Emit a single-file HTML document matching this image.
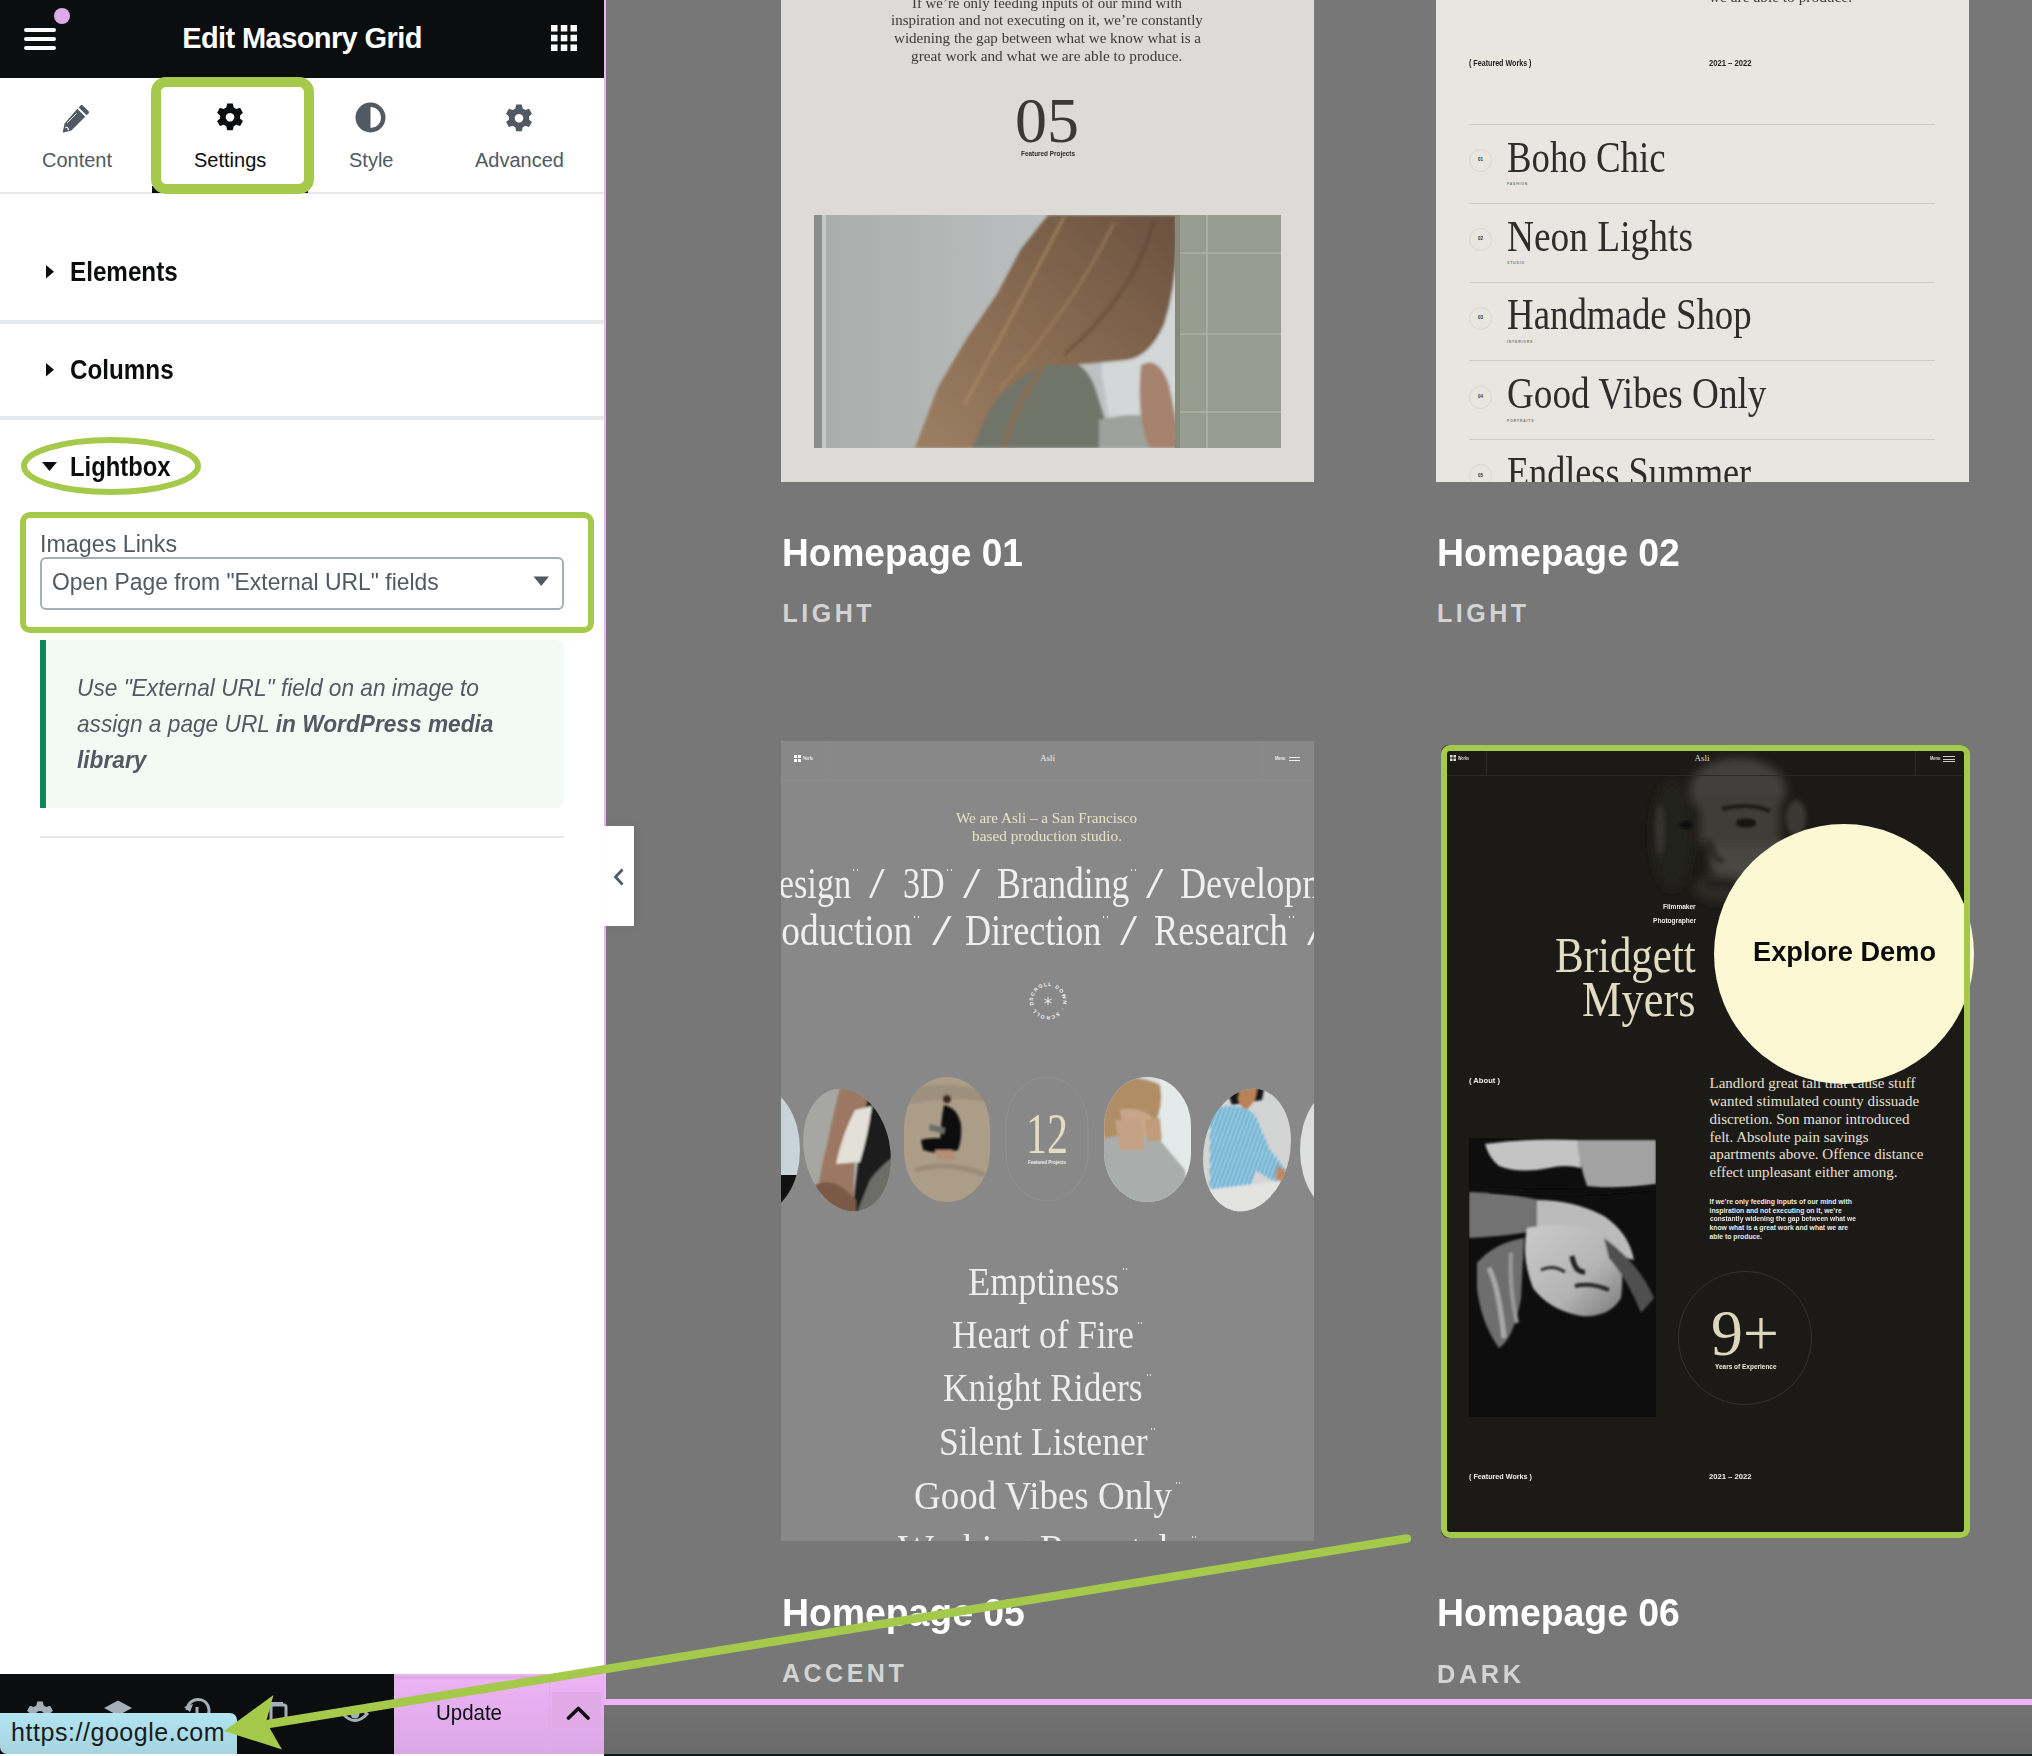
<!DOCTYPE html>
<html><head><meta charset="utf-8">
<style>
*{margin:0;padding:0;box-sizing:border-box}
html,body{width:2032px;height:1756px;overflow:hidden;background:#777777;font-family:"Liberation Sans",sans-serif}
.a{position:absolute}
.sx{display:inline-block;transform-origin:0 0;white-space:nowrap}
.serif{font-family:"Liberation Serif",serif}
#panel{position:absolute;left:0;top:0;width:604px;height:1756px;background:#fff;overflow:hidden}
#hdr{position:absolute;left:0;top:0;width:604px;height:78px;background:#0c0d0e}
.tablbl{position:absolute;top:148px;font-size:20px;color:#515962;white-space:nowrap;line-height:24px}
.sect{position:absolute;left:70px;margin-top:1px;font-size:28px;font-weight:bold;color:#0c0d0e;white-space:nowrap;line-height:32px}
.sep{position:absolute;left:0;width:604px;height:4px;background:#e6e8ea}
#preview{position:absolute;left:606px;top:0;width:1426px;height:1699px;background:#777;overflow:hidden}
.title{position:absolute;font-weight:bold;font-size:38px;color:#fff;white-space:nowrap;line-height:44px}
.sub{position:absolute;font-weight:bold;font-size:25px;color:#d2d2d2;letter-spacing:3.6px;white-space:nowrap;line-height:30px}
</style></head>
<body>
<!-- PREVIEW -->
<div id="preview"></div>
<!--PREVIEW-START-->
<div class="a" style="left:781px;top:0;width:533px;height:482px;background:#dcdbd8"></div>
<div class="a" style="left:912.0px;top:-5.5px;font:normal normal 15.5px/15.5px 'Liberation Serif',serif;color:#3b3a38;white-space:nowrap;transform:scaleX(0.959);transform-origin:0 0">If we’re only feeding inputs of our mind with</div>
<div class="a" style="left:891.0px;top:12.2px;font:normal normal 15.5px/15.5px 'Liberation Serif',serif;color:#3b3a38;white-space:nowrap;transform:scaleX(0.966);transform-origin:0 0">inspiration and not executing on it, we’re constantly</div>
<div class="a" style="left:893.5px;top:30.0px;font:normal normal 15.5px/15.5px 'Liberation Serif',serif;color:#3b3a38;white-space:nowrap;transform:scaleX(0.973);transform-origin:0 0">widening the gap between what we know what is a</div>
<div class="a" style="left:911.2px;top:47.6px;font:normal normal 15.5px/15.5px 'Liberation Serif',serif;color:#3b3a38;white-space:nowrap;transform:scaleX(0.987);transform-origin:0 0">great work and what we are able to produce.</div>
<div class="a" style="left:1015.0px;top:88.6px;font:normal normal 64px/64px 'Liberation Serif',serif;color:#3a3936;white-space:nowrap">05</div>
<div class="a" style="left:1020.5px;top:150.2px;font:normal bold 8px/8px 'Liberation Sans',sans-serif;color:#2a2a2a;white-space:nowrap;transform:scaleX(0.799);transform-origin:0 0">Featured Projects</div>
<svg class="a" style="left:814px;top:215px" width="467" height="233" viewBox="0 0 467 233">
<defs>
 <linearGradient id="c1bg" x1="0" y1="0" x2="1" y2="0"><stop offset="0" stop-color="#a9acaa"/><stop offset="0.45" stop-color="#b9bdbd"/><stop offset="1" stop-color="#c9cdcd"/></linearGradient>
 <filter id="bl1" x="-50%" y="-50%" width="200%" height="200%"><feGaussianBlur stdDeviation="1.6"/></filter>
 <linearGradient id="hair" x1="0" y1="1" x2="1" y2="0"><stop offset="0" stop-color="#9c7e62"/><stop offset="0.5" stop-color="#876a50"/><stop offset="1" stop-color="#6a5240"/></linearGradient>
</defs>
<rect width="467" height="233" fill="url(#c1bg)"/>
<rect x="0" y="0" width="10" height="233" fill="#8b8e88"/>
<rect x="8" y="0" width="4" height="233" fill="#c3c8c8"/>
<g filter="url(#bl1)">
<path d="M285 30 L363 10 L365 233 L300 233 L288 160 Z" fill="#d3d7d8"/>
<path d="M131 233 L160 185 Q200 150 240 140 Q270 145 280 170 L300 233 Z" fill="#717469"/>
<path d="M285 205 Q320 195 360 205 L365 233 L285 233 Z" fill="#9ea29c"/>
<path d="M327 150 Q345 140 355 170 L368 233 L335 233 Q322 200 327 150 Z" fill="#a5826e"/>
<path d="M234 0 L362 0 Q366 60 350 110 Q335 142 313 145 Q270 150 230 150 Q195 165 175 195 L158 233 L101 233 L124 172 L153 123 L183 79 L207 34 Z" fill="url(#hair)"/>
<path d="M250 2 Q215 70 150 190" stroke="#b08d68" stroke-width="3" fill="none" opacity="0.6"/>
<path d="M300 8 Q260 90 185 175" stroke="#a98560" stroke-width="3" fill="none" opacity="0.5"/>
<path d="M340 5 Q320 80 250 140" stroke="#5c4535" stroke-width="4" fill="none" opacity="0.5"/>
<path d="M230 150 Q200 190 190 233" stroke="#8f6d4f" stroke-width="5" fill="none" opacity="0.8"/>
</g>
<rect x="364" y="0" width="103" height="233" fill="#989c90"/>
<g stroke="#adb1a6" stroke-width="1.6">
<line x1="364" y1="38" x2="467" y2="38"/><line x1="364" y1="119" x2="467" y2="119"/><line x1="364" y1="197" x2="467" y2="197"/>
<line x1="393" y1="0" x2="393" y2="233"/>
</g>
<rect x="361" y="0" width="5" height="233" fill="#858979"/>
</svg>
<div class="a" style="left:1436px;top:0;width:533px;height:482px;background:#e7e6e1;overflow:hidden"></div>
<div class="a" style="left:1709.0px;top:-11.5px;font:normal normal 15.5px/15.5px 'Liberation Serif',serif;color:#3b3a38;white-space:nowrap;transform:scaleX(0.992);transform-origin:0 0">we are able to produce.</div>
<div class="a" style="left:1469.0px;top:59.3px;font:normal bold 8.5px/8.5px 'Liberation Sans',sans-serif;color:#222120;white-space:nowrap;transform:scaleX(0.839);transform-origin:0 0">( Featured Works )</div>
<div class="a" style="left:1709.0px;top:59.3px;font:normal bold 8.5px/8.5px 'Liberation Sans',sans-serif;color:#222120;white-space:nowrap;transform:scaleX(0.899);transform-origin:0 0">2021 – 2022</div>
<div class="a" style="left:1469px;top:124.0px;width:466px;height:1px;background:#cdcbc6"></div>
<div class="a" style="left:1469px;top:202.8px;width:466px;height:1px;background:#cdcbc6"></div>
<div class="a" style="left:1469px;top:281.8px;width:466px;height:1px;background:#cdcbc6"></div>
<div class="a" style="left:1469px;top:360.3px;width:466px;height:1px;background:#cdcbc6"></div>
<div class="a" style="left:1469px;top:438.9px;width:466px;height:1px;background:#cdcbc6"></div>
<div class="a" style="left:1507.0px;top:135.8px;font:normal normal 44px/44px 'Liberation Serif',serif;color:#2e2d2b;white-space:nowrap;transform:scaleX(0.837);transform-origin:0 0">Boho Chic</div>
<div class="a" style="left:1469px;top:149.2px;width:23px;height:23px;border:1px solid #d9d7d2;border-radius:50%"></div>
<div class="a" style="left:1478.1px;top:158.4px;font:normal bold 4.5px/4.5px 'Liberation Sans',sans-serif;color:#333;white-space:nowrap">01</div>
<div class="a" style="left:1507.0px;top:183.2px;font:normal bold 3.5px/3.5px 'Liberation Sans',sans-serif;color:#777;white-space:nowrap;letter-spacing:0.8px">FASHION</div>
<div class="a" style="left:1507.0px;top:214.7px;font:normal normal 44px/44px 'Liberation Serif',serif;color:#2e2d2b;white-space:nowrap;transform:scaleX(0.850);transform-origin:0 0">Neon Lights</div>
<div class="a" style="left:1469px;top:228.0px;width:23px;height:23px;border:1px solid #d9d7d2;border-radius:50%"></div>
<div class="a" style="left:1478.1px;top:237.2px;font:normal bold 4.5px/4.5px 'Liberation Sans',sans-serif;color:#333;white-space:nowrap">02</div>
<div class="a" style="left:1507.0px;top:262.0px;font:normal bold 3.5px/3.5px 'Liberation Sans',sans-serif;color:#777;white-space:nowrap;letter-spacing:0.8px">STUDIO</div>
<div class="a" style="left:1507.0px;top:293.3px;font:normal normal 44px/44px 'Liberation Serif',serif;color:#2e2d2b;white-space:nowrap;transform:scaleX(0.838);transform-origin:0 0">Handmade Shop</div>
<div class="a" style="left:1469px;top:306.7px;width:23px;height:23px;border:1px solid #d9d7d2;border-radius:50%"></div>
<div class="a" style="left:1478.1px;top:315.9px;font:normal bold 4.5px/4.5px 'Liberation Sans',sans-serif;color:#333;white-space:nowrap">03</div>
<div class="a" style="left:1507.0px;top:340.7px;font:normal bold 3.5px/3.5px 'Liberation Sans',sans-serif;color:#777;white-space:nowrap;letter-spacing:0.8px">INTERIORS</div>
<div class="a" style="left:1507.0px;top:372.1px;font:normal normal 44px/44px 'Liberation Serif',serif;color:#2e2d2b;white-space:nowrap;transform:scaleX(0.845);transform-origin:0 0">Good Vibes Only</div>
<div class="a" style="left:1469px;top:385.5px;width:23px;height:23px;border:1px solid #d9d7d2;border-radius:50%"></div>
<div class="a" style="left:1478.1px;top:394.7px;font:normal bold 4.5px/4.5px 'Liberation Sans',sans-serif;color:#333;white-space:nowrap">04</div>
<div class="a" style="left:1507.0px;top:419.5px;font:normal bold 3.5px/3.5px 'Liberation Sans',sans-serif;color:#777;white-space:nowrap;letter-spacing:0.8px">PORTRAITS</div>
<div class="a" style="left:1507.0px;top:450.9px;font:normal normal 44px/44px 'Liberation Serif',serif;color:#2e2d2b;white-space:nowrap;transform:scaleX(0.822);transform-origin:0 0">Endless Summer</div>
<div class="a" style="left:1469px;top:464.3px;width:23px;height:23px;border:1px solid #d9d7d2;border-radius:50%"></div>
<div class="a" style="left:1478.1px;top:473.5px;font:normal bold 4.5px/4.5px 'Liberation Sans',sans-serif;color:#333;white-space:nowrap">05</div>
<div class="a" style="left:1507.0px;top:498.3px;font:normal bold 3.5px/3.5px 'Liberation Sans',sans-serif;color:#777;white-space:nowrap;letter-spacing:0.8px">COMMERCIAL</div>
<div class="a" style="left:1436px;top:481.7px;width:533px;height:40px;background:#777"></div>
<div class="a" style="left:781px;top:741px;width:533px;height:800px;background:#888888"></div>
<div class="a" style="left:781px;top:780px;width:533px;height:1px;background:#8c8c8c"></div>
<div class="a" style="left:830px;top:741px;width:1px;height:39px;background:#8b8b8b"></div>
<div class="a" style="left:1261px;top:741px;width:1px;height:39px;background:#8b8b8b"></div>
<svg class="a" style="left:794px;top:755px" width="7" height="7"><g fill="#fff"><rect width="3" height="3"/><rect x="4" width="3" height="3"/><rect y="4" width="3" height="3"/><rect x="4" y="4" width="3" height="3"/></g></svg>
<div class="a" style="left:803.0px;top:755.9px;font:normal bold 5.5px/5.5px 'Liberation Serif',serif;color:#eee;white-space:nowrap;transform:scaleX(0.642);transform-origin:0 0">Works</div>
<div class="a" style="left:1040.0px;top:754.0px;font:normal normal 9px/9px 'Liberation Serif',serif;color:#eee;white-space:nowrap">Asli</div>
<div class="a" style="left:1275.0px;top:756.7px;font:normal bold 4.5px/4.5px 'Liberation Sans',sans-serif;color:#eee;white-space:nowrap;transform:scaleX(0.894);transform-origin:0 0">Menu</div>
<div class="a" style="left:1289px;top:757px;width:11px;height:1.2px;background:#eee"></div><div class="a" style="left:1289px;top:760px;width:11px;height:1.2px;background:#eee"></div>
<div class="a" style="left:956.0px;top:810.0px;font:normal normal 15.5px/15.5px 'Liberation Serif',serif;color:#e9e2c6;white-space:nowrap;transform:scaleX(0.976);transform-origin:0 0">We are Asli – a San Francisco</div>
<div class="a" style="left:972.0px;top:828.0px;font:normal normal 15.5px/15.5px 'Liberation Serif',serif;color:#e9e2c6;white-space:nowrap;transform:scaleX(0.987);transform-origin:0 0">based production studio.</div>
<div class="a" style="left:781px;top:0;width:533px;height:0"></div>
<!--marquee-->
<div class="a" style="left:753.5px;top:861.6px;font:normal normal 44px/44px 'Liberation Serif',serif;color:#f0f0f0;white-space:nowrap;transform:scaleX(0.780);transform-origin:0 0">Design</div>
<div class="a" style="left:869.0px;top:861.6px;font:normal normal 44px/44px 'Liberation Serif',serif;color:#f0f0f0;white-space:nowrap;transform:scaleX(1.278);transform-origin:0 0">/</div>
<div class="a" style="left:903.0px;top:861.6px;font:normal normal 44px/44px 'Liberation Serif',serif;color:#f0f0f0;white-space:nowrap;transform:scaleX(0.772);transform-origin:0 0">3D</div>
<div class="a" style="left:963.0px;top:861.6px;font:normal normal 44px/44px 'Liberation Serif',serif;color:#f0f0f0;white-space:nowrap;transform:scaleX(1.432);transform-origin:0 0">/</div>
<div class="a" style="left:996.8px;top:861.6px;font:normal normal 44px/44px 'Liberation Serif',serif;color:#f0f0f0;white-space:nowrap;transform:scaleX(0.807);transform-origin:0 0">Branding</div>
<div class="a" style="left:1146.0px;top:861.6px;font:normal normal 44px/44px 'Liberation Serif',serif;color:#f0f0f0;white-space:nowrap;transform:scaleX(1.432);transform-origin:0 0">/</div>
<div class="a" style="left:1179.8px;top:861.6px;font:normal normal 44px/44px 'Liberation Serif',serif;color:#f0f0f0;white-space:nowrap;transform:scaleX(0.820);transform-origin:0 0">Development</div>
<div class="a" style="left:747.9px;top:908.6px;font:normal normal 44px/44px 'Liberation Serif',serif;color:#f0f0f0;white-space:nowrap;transform:scaleX(0.850);transform-origin:0 0">Production</div>
<div class="a" style="left:932.0px;top:908.6px;font:normal normal 44px/44px 'Liberation Serif',serif;color:#f0f0f0;white-space:nowrap;transform:scaleX(1.595);transform-origin:0 0">/</div>
<div class="a" style="left:964.5px;top:908.6px;font:normal normal 44px/44px 'Liberation Serif',serif;color:#f0f0f0;white-space:nowrap;transform:scaleX(0.821);transform-origin:0 0">Direction</div>
<div class="a" style="left:1120.0px;top:908.6px;font:normal normal 44px/44px 'Liberation Serif',serif;color:#f0f0f0;white-space:nowrap;transform:scaleX(1.401);transform-origin:0 0">/</div>
<div class="a" style="left:1153.6px;top:908.6px;font:normal normal 44px/44px 'Liberation Serif',serif;color:#f0f0f0;white-space:nowrap;transform:scaleX(0.830);transform-origin:0 0">Research</div>
<div class="a" style="left:1307.0px;top:908.6px;font:normal normal 44px/44px 'Liberation Serif',serif;color:#f0f0f0;white-space:nowrap;transform:scaleX(1.432);transform-origin:0 0">/</div>
<div class="a" style="left:852.5px;top:869px;width:5px;height:2px;border-left:1.5px solid #eee;border-right:1.5px solid #eee"></div>
<div class="a" style="left:947px;top:869px;width:5px;height:2px;border-left:1.5px solid #eee;border-right:1.5px solid #eee"></div>
<div class="a" style="left:1131px;top:869px;width:5px;height:2px;border-left:1.5px solid #eee;border-right:1.5px solid #eee"></div>
<div class="a" style="left:914px;top:916px;width:5px;height:2px;border-left:1.5px solid #eee;border-right:1.5px solid #eee"></div>
<div class="a" style="left:1103px;top:916px;width:5px;height:2px;border-left:1.5px solid #eee;border-right:1.5px solid #eee"></div>
<div class="a" style="left:1289px;top:916px;width:5px;height:2px;border-left:1.5px solid #eee;border-right:1.5px solid #eee"></div>
<div class="a" style="left:606px;top:850px;width:175px;height:120px;background:#777"></div>
<div class="a" style="left:1314px;top:850px;width:122px;height:120px;background:#777"></div>
<svg class="a" style="left:1026px;top:979px" width="44" height="44" viewBox="0 0 44 44">
<defs><path id="cp" d="M22 22 m-15 0 a15 15 0 1 1 30 0 a15 15 0 1 1 -30 0"/></defs>
<text font-family="Liberation Sans" font-size="5" font-weight="bold" fill="#f4f4f4" letter-spacing="1.2"><textPath href="#cp">SCROLL DOWN · SCROLL DOWN ·</textPath></text>
<path d="M22 18 V26 M18.5 20 L25.5 24 M25.5 20 L18.5 24" stroke="#f4f4f4" stroke-width="0.9"/>
</svg>
<svg class="a" style="left:781px;top:1060px" width="533" height="170" viewBox="781 1060 533 170">
<defs>
<pattern id="stripes" patternUnits="userSpaceOnUse" width="4" height="4" patternTransform="rotate(20)"><rect width="4" height="4" fill="#4aa2c9"/><rect width="1.4" height="4" fill="#d8eef6"/></pattern>
<clipPath id="o1"><ellipse cx="847" cy="1150" rx="43" ry="62" transform="rotate(-12 847 1150)"/></clipPath>
<clipPath id="o2"><rect x="904" y="1077" width="86" height="125" rx="43" ry="50"/></clipPath>
<clipPath id="o4"><rect x="1104" y="1077" width="87" height="125" rx="43" ry="50"/></clipPath>
<clipPath id="o5"><ellipse cx="1247" cy="1150" rx="43" ry="62" transform="rotate(12 1247 1150)"/></clipPath>
<clipPath id="o0"><ellipse cx="760" cy="1150" rx="40" ry="62"/></clipPath>
<clipPath id="o6"><ellipse cx="1340" cy="1150" rx="40" ry="62"/></clipPath>
<filter id="bl2" x="-50%" y="-50%" width="200%" height="200%"><feGaussianBlur stdDeviation="1.2"/></filter>
</defs>
<g clip-path="url(#o0)"><rect x="740" y="1070" width="60" height="160" fill="#c9d3da"/><rect x="740" y="1175" width="60" height="60" fill="#111"/></g>
<g clip-path="url(#o1)"><rect x="795" y="1080" width="110" height="140" fill="#a6a7a2"/>
 <g filter="url(#bl2)">
 <path d="M868 1085 L900 1085 L905 1230 L850 1230 Z" fill="#1c1f1e"/>
 <path d="M870 1180 Q885 1160 905 1150 L905 1230 L850 1230 Z" fill="#6c6d69"/>
 <path d="M842 1082 L875 1082 Q862 1110 855 1150 Q852 1190 856 1230 L812 1230 Q818 1180 828 1140 Q835 1105 842 1082 Z" fill="#9c7862"/>
 <path d="M815 1185 Q835 1175 856 1200 L856 1230 L812 1230 Z" fill="#7a5a47"/>
 <path d="M855 1110 L872 1106 Q868 1135 860 1162 L836 1164 Q842 1135 855 1110 Z" fill="#e3e0d8"/>
 </g></g>
<g clip-path="url(#o2)"><rect x="900" y="1070" width="95" height="140" fill="#ab9d88"/>
 <g filter="url(#bl2)">
 <path d="M912 1088 Q950 1080 985 1092 L990 1102 Q950 1095 910 1104 Z" fill="#9d907c"/>
 <path d="M915 1170 Q950 1160 985 1175" stroke="#9a8c78" stroke-width="5" fill="none"/>
 <circle cx="947" cy="1099" r="4.2" fill="#3a2c22"/>
 <path d="M944 1105 Q958 1108 961 1125 Q962 1140 958 1150 L940 1150 Q940 1125 944 1105 Z" fill="#0f0f0f"/>
 <path d="M921 1140 Q935 1136 950 1140 L958 1150 Q940 1156 923 1150 Z" fill="#0f0f0f"/>
 <path d="M935 1150 L952 1150 L956 1160 L938 1160 Z" fill="#b58e74"/>
 <path d="M930 1124 L945 1128 L944 1134 L929 1130 Z" fill="#6b6e6a"/>
 </g></g>
<rect x="1006" y="1077" width="82" height="124" rx="41" ry="48" fill="none" stroke="#929292" stroke-width="1"/>
<g clip-path="url(#o4)"><rect x="1100" y="1070" width="95" height="140" fill="#d9dfdf"/>
 <g filter="url(#bl2)">
 <path d="M1160 1077 L1195 1077 L1195 1210 L1160 1210 Z" fill="#e4eaea"/>
 <path d="M1100 1085 Q1130 1070 1160 1085 Q1165 1110 1150 1130 L1105 1150 Z" fill="#b18d66"/>
 <path d="M1120 1110 Q1140 1105 1155 1120 L1150 1140 L1125 1140 Z" fill="#c8a68a"/>
 <path d="M1100 1140 Q1130 1130 1160 1140 L1185 1170 L1190 1210 L1100 1210 Z" fill="#a9aeac"/>
 <path d="M1115 1120 L1140 1120 L1145 1150 L1120 1150 Z" fill="#c4a184"/>
 <path d="M1145 1120 L1160 1118 L1162 1140 L1148 1142 Z" fill="#c09b7c"/>
 </g></g>
<g clip-path="url(#o5)"><rect x="1195" y="1080" width="105" height="140" fill="#d3d5d5"/>
 <g filter="url(#bl2)">
 <path d="M1225 1085 L1265 1085 L1262 1100 L1232 1105 Z" fill="#121212"/>
 <path d="M1240 1085 L1258 1085 L1255 1100 L1245 1112 L1238 1100 Z" fill="#b98159"/>
 <path d="M1210 1110 Q1240 1100 1255 1115 L1270 1150 L1290 1175 L1280 1185 L1255 1170 L1250 1195 L1210 1200 Z" fill="url(#stripes)"/>
 <path d="M1205 1190 L1285 1180 L1295 1230 L1200 1230 Z" fill="#e3e3e1"/>
 <path d="M1278 1165 L1295 1178 L1290 1188 L1275 1178 Z" fill="#c08a66"/>
 </g></g>
<g clip-path="url(#o6)"><rect x="1290" y="1070" width="60" height="160" fill="#dddede"/></g>
</svg>
<div class="a" style="left:1026.0px;top:1105.4px;font:normal normal 58px/58px 'Liberation Serif',serif;color:#e4ddc2;white-space:nowrap;transform:scaleX(0.724);transform-origin:0 0">12</div>
<div class="a" style="left:1028.0px;top:1161.2px;font:normal bold 4.5px/4.5px 'Liberation Sans',sans-serif;color:#f0f0f0;white-space:nowrap">Featured Projects</div>
<div class="a" style="left:967.5px;top:1261.5px;font:normal normal 40px/40px 'Liberation Serif',serif;color:#eeeeee;white-space:nowrap;transform:scaleX(0.906);transform-origin:0 0">Emptiness</div>
<div class="a" style="left:1122.5px;top:1268.0px;width:4px;height:2px;border-left:1px solid #ddd;border-right:1px solid #ddd"></div>
<div class="a" style="left:952.0px;top:1315.3px;font:normal normal 40px/40px 'Liberation Serif',serif;color:#eeeeee;white-space:nowrap;transform:scaleX(0.881);transform-origin:0 0">Heart of Fire</div>
<div class="a" style="left:1138.0px;top:1321.8px;width:4px;height:2px;border-left:1px solid #ddd;border-right:1px solid #ddd"></div>
<div class="a" style="left:943.2px;top:1367.9px;font:normal normal 40px/40px 'Liberation Serif',serif;color:#eeeeee;white-space:nowrap;transform:scaleX(0.885);transform-origin:0 0">Knight Riders</div>
<div class="a" style="left:1146.8px;top:1374.4px;width:4px;height:2px;border-left:1px solid #ddd;border-right:1px solid #ddd"></div>
<div class="a" style="left:938.8px;top:1421.5px;font:normal normal 40px/40px 'Liberation Serif',serif;color:#eeeeee;white-space:nowrap;transform:scaleX(0.890);transform-origin:0 0">Silent Listener</div>
<div class="a" style="left:1151.2px;top:1428.0px;width:4px;height:2px;border-left:1px solid #ddd;border-right:1px solid #ddd"></div>
<div class="a" style="left:913.8px;top:1475.5px;font:normal normal 40px/40px 'Liberation Serif',serif;color:#eeeeee;white-space:nowrap;transform:scaleX(0.924);transform-origin:0 0">Good Vibes Only</div>
<div class="a" style="left:1176.2px;top:1482.0px;width:4px;height:2px;border-left:1px solid #ddd;border-right:1px solid #ddd"></div>
<div class="a" style="left:898.0px;top:1529.0px;font:normal normal 40px/40px 'Liberation Serif',serif;color:#eeeeee;white-space:nowrap;transform:scaleX(0.952);transform-origin:0 0">Working Remotely</div>
<div class="a" style="left:1192.0px;top:1535.5px;width:4px;height:2px;border-left:1px solid #ddd;border-right:1px solid #ddd"></div>
<div class="a" style="left:781px;top:1541.4px;width:533px;height:50px;background:#777"></div>
<div class="a" style="left:1441px;top:745px;width:528px;height:793px;background:#1c1a17;border-radius:8px;overflow:hidden"></div>
<svg class="a" style="left:1447px;top:751px" width="516" height="780" viewBox="1447 751 516 780">
<defs>
<filter id="bl3" x="-50%" y="-50%" width="200%" height="200%"><feGaussianBlur stdDeviation="5"/></filter>
<filter id="bl4" x="-50%" y="-50%" width="200%" height="200%"><feGaussianBlur stdDeviation="2"/></filter>
<filter id="bl5" x="-50%" y="-50%" width="200%" height="200%"><feGaussianBlur stdDeviation="1.2"/></filter>
<linearGradient id="fg" x1="0" y1="0" x2="1" y2="0"><stop offset="0" stop-color="#3a3632"/><stop offset="0.45" stop-color="#5f5a55"/><stop offset="1" stop-color="#6e6964"/></linearGradient>
</defs>
<g filter="url(#bl3)">
<ellipse cx="1672" cy="835" rx="20" ry="55" fill="#24211f"/>
<ellipse cx="1738" cy="790" rx="48" ry="32" fill="#43403c"/>
<ellipse cx="1748" cy="858" rx="38" ry="38" fill="#4a4743"/>
<rect x="1700" y="795" width="80" height="50" fill="#3f3c38"/>
<ellipse cx="1722" cy="888" rx="28" ry="14" fill="#2e2b28"/>
</g>
<g filter="url(#bl4)">
<ellipse cx="1796" cy="818" rx="10" ry="18" fill="#3a3733"/>
<ellipse cx="1660" cy="830" rx="5" ry="26" fill="#34312d"/>
<path d="M1708 840 Q1712 858 1724 862" stroke="#262320" stroke-width="4" fill="none"/>
<path d="M1705 884 Q1720 882 1736 887" stroke="#221f1c" stroke-width="5" fill="none"/>
</g>
<g filter="url(#bl5)">
<path d="M1722 809 Q1748 802 1770 811" stroke="#1e1b19" stroke-width="4" fill="none"/>
<ellipse cx="1746" cy="823" rx="10" ry="4.5" fill="#141210"/>
<ellipse cx="1686" cy="825" rx="7" ry="3.5" fill="#0e0d0c"/>
</g>
<rect x="1469" y="1138" width="187" height="279" fill="#101010"/>
<svg x="1469" y="1138" width="187" height="279" viewBox="0 0 187 279">
<defs><linearGradient id="bwface" x1="0" y1="0" x2="1" y2="1"><stop offset="0" stop-color="#cacaca"/><stop offset="0.6" stop-color="#b4b4b4"/><stop offset="1" stop-color="#7a7a7a"/></linearGradient></defs>
<rect width="187" height="279" fill="#0e0e0e"/>
<g filter="url(#bl5)">
<path d="M16 6 Q60 0 110 2 L112 30 Q95 26 80 30 Q50 36 30 28 Q20 20 16 6 Z" fill="#c4c4c4"/>
<path d="M108 2 L187 2 L187 46 Q150 52 118 48 Q110 25 108 2 Z" fill="#a2a2a2"/>
<path d="M0 54 Q40 55 70 62 L70 92 Q40 98 0 100 Z" fill="#727272"/>
<path d="M68 62 Q105 62 135 78 Q160 95 165 122 L152 118 Q125 95 95 90 L68 92 Z" fill="#bbbbbb"/>
<path d="M58 90 Q95 82 135 95 Q158 115 152 160 Q140 180 112 178 Q80 172 64 150 Q52 120 58 90 Z" fill="url(#bwface)"/>
<path d="M8 125 Q25 105 55 100 L52 160 Q45 200 30 210 Q12 185 8 150 Z" fill="#6e6e6e"/><path d="M20 130 Q30 150 35 200" stroke="#a8a8a8" stroke-width="5" fill="none"/><path d="M42 115 Q40 150 48 185" stroke="#9a9a9a" stroke-width="4" fill="none"/>
<path d="M135 100 Q170 125 185 160 L172 175 Q158 140 140 120 Z" fill="#4f4f4f"/>
</g>
<g filter="url(#bl5)">
<path d="M72 132 Q84 126 96 134" stroke="#2e2e2e" stroke-width="3" fill="none"/>
<path d="M103 118 Q106 135 116 134" stroke="#232323" stroke-width="5" fill="none"/>
<path d="M106 148 Q122 144 140 152" stroke="#262626" stroke-width="4" fill="none"/>
<path d="M20 52 Q90 58 186 50" stroke="#0e0e0e" stroke-width="5" fill="none"/>
</g>
</svg>
</svg>
<div class="a" style="left:1447px;top:775px;width:516px;height:1px;background:#2c2a26"></div>
<div class="a" style="left:1485.6px;top:751px;width:1px;height:24px;background:#2c2a26"></div>
<div class="a" style="left:1914.7px;top:751px;width:1px;height:24px;background:#2c2a26"></div>
<svg class="a" style="left:1450px;top:755px" width="6" height="6"><g fill="#ddd"><rect width="2.5" height="2.5"/><rect x="3.5" width="2.5" height="2.5"/><rect y="3.5" width="2.5" height="2.5"/><rect x="3.5" y="3.5" width="2.5" height="2.5"/></g></svg>
<div class="a" style="left:1458.0px;top:756.2px;font:normal bold 5px/5px 'Liberation Sans',sans-serif;color:#ddd;white-space:nowrap;transform:scaleX(0.724);transform-origin:0 0">Works</div>
<div class="a" style="left:1694.5px;top:754.0px;font:normal normal 9px/9px 'Liberation Serif',serif;color:#ddd;white-space:nowrap">Asli</div>
<div class="a" style="left:1930.0px;top:756.7px;font:normal bold 4.5px/4.5px 'Liberation Sans',sans-serif;color:#ddd;white-space:nowrap;transform:scaleX(0.894);transform-origin:0 0">Menu</div>
<div class="a" style="left:1943px;top:756px;width:12px;height:1px;background:#ccc"></div><div class="a" style="left:1943px;top:758.5px;width:12px;height:1px;background:#ccc"></div><div class="a" style="left:1943px;top:761px;width:12px;height:1px;background:#ccc"></div>
<div class="a" style="left:1663.0px;top:903.4px;font:normal bold 7.5px/7.5px 'Liberation Sans',sans-serif;color:#eeeeee;white-space:nowrap;transform:scaleX(0.869);transform-origin:0 0">Filmmaker</div>
<div class="a" style="left:1652.6px;top:917.0px;font:normal bold 7.5px/7.5px 'Liberation Sans',sans-serif;color:#eeeeee;white-space:nowrap;transform:scaleX(0.875);transform-origin:0 0">Photographer</div>
<div class="a" style="left:1554.8px;top:930.0px;font:normal normal 50px/50px 'Liberation Serif',serif;color:#e2dcc3;white-space:nowrap;transform:scaleX(0.859);transform-origin:0 0">Bridgett</div>
<div class="a" style="left:1582.0px;top:974.4px;font:normal normal 50px/50px 'Liberation Serif',serif;color:#e2dcc3;white-space:nowrap;transform:scaleX(0.889);transform-origin:0 0">Myers</div>
<div class="a" style="left:1469.2px;top:1077.1px;font:normal bold 7.5px/7.5px 'Liberation Sans',sans-serif;color:#eeeeee;white-space:nowrap;transform:scaleX(1.016);transform-origin:0 0">( About )</div>
<div class="a" style="left:1709.5px;top:1076.4px;font:normal normal 15px/15px 'Liberation Serif',serif;color:#e4e0d4;white-space:nowrap">Landlord great tall that cause stuff</div>
<div class="a" style="left:1709.5px;top:1094.1px;font:normal normal 15px/15px 'Liberation Serif',serif;color:#e4e0d4;white-space:nowrap">wanted stimulated county dissuade</div>
<div class="a" style="left:1709.5px;top:1111.8px;font:normal normal 15px/15px 'Liberation Serif',serif;color:#e4e0d4;white-space:nowrap">discretion. Son manor introduced</div>
<div class="a" style="left:1709.5px;top:1129.5px;font:normal normal 15px/15px 'Liberation Serif',serif;color:#e4e0d4;white-space:nowrap">felt. Absolute pain savings</div>
<div class="a" style="left:1709.5px;top:1147.2px;font:normal normal 15px/15px 'Liberation Serif',serif;color:#e4e0d4;white-space:nowrap">apartments above. Offence distance</div>
<div class="a" style="left:1709.5px;top:1164.9px;font:normal normal 15px/15px 'Liberation Serif',serif;color:#e4e0d4;white-space:nowrap">effect unpleasant either among.</div>
<div class="a" style="left:1709.5px;top:1198.6px;font:normal bold 6.8px/6.8px 'Liberation Sans',sans-serif;color:#e8e8e8;white-space:nowrap">If we’re only feeding inputs of our mind with</div>
<div class="a" style="left:1709.5px;top:1207.5px;font:normal bold 6.8px/6.8px 'Liberation Sans',sans-serif;color:#e8e8e8;white-space:nowrap">inspiration and not executing on it, we’re</div>
<div class="a" style="left:1709.5px;top:1216.4px;font:normal bold 6.8px/6.8px 'Liberation Sans',sans-serif;color:#e8e8e8;white-space:nowrap;transform:scaleX(0.981);transform-origin:0 0">constantly widening the gap between what we</div>
<div class="a" style="left:1709.5px;top:1225.3px;font:normal bold 6.8px/6.8px 'Liberation Sans',sans-serif;color:#e8e8e8;white-space:nowrap">know what is a great work and what we are</div>
<div class="a" style="left:1709.5px;top:1234.2px;font:normal bold 6.8px/6.8px 'Liberation Sans',sans-serif;color:#e8e8e8;white-space:nowrap">able to produce.</div>
<div class="a" style="left:1678px;top:1271px;width:134px;height:134px;border:1px solid #34322d;border-radius:50%"></div>
<div class="a" style="left:1711.1px;top:1299.7px;font:normal normal 66px/66px 'Liberation Serif',serif;color:#dcd6bb;white-space:nowrap;transform:scaleX(0.966);transform-origin:0 0">9+</div>
<div class="a" style="left:1714.8px;top:1364.2px;font:normal bold 6.8px/6.8px 'Liberation Sans',sans-serif;color:#efe9cf;white-space:nowrap;transform:scaleX(0.953);transform-origin:0 0">Years of Experience</div>
<div class="a" style="left:1469.0px;top:1473.1px;font:normal bold 7.5px/7.5px 'Liberation Sans',sans-serif;color:#eeeeee;white-space:nowrap;transform:scaleX(0.959);transform-origin:0 0">( Featured Works )</div>
<div class="a" style="left:1709.0px;top:1473.1px;font:normal bold 7.5px/7.5px 'Liberation Sans',sans-serif;color:#eeeeee;white-space:nowrap;transform:scaleX(1.019);transform-origin:0 0">2021 – 2022</div>
<!--c6end-->
<div class="a" style="left:1713.5px;top:823.5px;width:260px;height:260px;border-radius:50%;background:#fbf8d3"></div>
<div class="a" style="left:1752.5px;top:939.0px;font:normal bold 27px/27px 'Liberation Sans',sans-serif;color:#0c0c0c;white-space:nowrap;transform:scaleX(1.008);transform-origin:0 0">Explore Demo</div>
<div class="a" style="left:1441px;top:745px;width:529px;height:793px;border:6.5px solid #a5c94a;border-radius:9px"></div>
<div class="a" style="left:782.0px;top:534.3px;font:normal bold 38px/38px 'Liberation Sans',sans-serif;color:#ffffff;white-space:nowrap;transform:scaleX(0.975);transform-origin:0 0">Homepage 01</div>
<div class="a" style="left:782.5px;top:601.0px;font:normal bold 25px/25px 'Liberation Sans',sans-serif;color:#d3d3d3;white-space:nowrap;letter-spacing:3.5px">LIGHT</div>
<div class="a" style="left:1437.0px;top:534.3px;font:normal bold 38px/38px 'Liberation Sans',sans-serif;color:#ffffff;white-space:nowrap;transform:scaleX(0.983);transform-origin:0 0">Homepage 02</div>
<div class="a" style="left:1437.0px;top:601.0px;font:normal bold 25px/25px 'Liberation Sans',sans-serif;color:#d3d3d3;white-space:nowrap;letter-spacing:3.5px">LIGHT</div>
<div class="a" style="left:782.0px;top:1593.7px;font:normal bold 38px/38px 'Liberation Sans',sans-serif;color:#ffffff;white-space:nowrap;transform:scaleX(0.983);transform-origin:0 0">Homepage 05</div>
<div class="a" style="left:782.0px;top:1661.2px;font:normal bold 25px/25px 'Liberation Sans',sans-serif;color:#d3d3d3;white-space:nowrap;letter-spacing:3.5px">ACCENT</div>
<div class="a" style="left:1437.0px;top:1594.3px;font:normal bold 38px/38px 'Liberation Sans',sans-serif;color:#ffffff;white-space:nowrap;transform:scaleX(0.983);transform-origin:0 0">Homepage 06</div>
<div class="a" style="left:1437.0px;top:1661.8px;font:normal bold 25px/25px 'Liberation Sans',sans-serif;color:#d3d3d3;white-space:nowrap;letter-spacing:3.5px;transform:scaleX(1.016);transform-origin:0 0">DARK</div>
<!--PREVIEW-END-->

<!-- bottom strip below pink line -->
<div class="a" style="left:604px;top:1699px;width:1428px;height:6px;background:#eeb4f8"></div>
<div class="a" style="left:604px;top:1705px;width:1428px;height:49px;background:linear-gradient(#727272,#6a6a6a)"></div>
<div class="a" style="left:0;top:1754px;width:2032px;height:2px;background:#0e1a1c"></div>
<div class="a" style="left:604px;top:0;width:2px;height:1699px;background:#eeb4f8"></div>

<!-- PANEL -->
<div id="panel">
  <div id="hdr">
    <div class="a" style="left:24px;top:28px;width:32px;height:4px;border-radius:2px;background:#fff"></div>
    <div class="a" style="left:24px;top:37px;width:32px;height:4px;border-radius:2px;background:#fff"></div>
    <div class="a" style="left:24px;top:46px;width:32px;height:4px;border-radius:2px;background:#fff"></div>
    <div class="a" style="left:54px;top:8px;width:16px;height:16px;border-radius:50%;background:#dfaaec"></div>
    <div class="a" style="left:0;top:20px;width:604px;text-align:center;color:#fff;font-weight:bold;font-size:29px;line-height:36px;letter-spacing:-0.6px">Edit Masonry Grid</div>
    <svg class="a" style="left:551px;top:25px" width="26" height="26"><g fill="#fff"><rect x="0" y="0" width="6.5" height="6.5"/><rect x="9.8" y="0" width="6.5" height="6.5"/><rect x="19.5" y="0" width="6.5" height="6.5"/><rect x="0" y="9.8" width="6.5" height="6.5"/><rect x="9.8" y="9.8" width="6.5" height="6.5"/><rect x="19.5" y="9.8" width="6.5" height="6.5"/><rect x="0" y="19.5" width="6.5" height="6.5"/><rect x="9.8" y="19.5" width="6.5" height="6.5"/><rect x="19.5" y="19.5" width="6.5" height="6.5"/></g></svg>
  </div>
  <!-- tabs -->
  <svg class="a" style="left:60px;top:102px" width="32" height="32" viewBox="0 0 32 32">
    <path d="M22.5 3.2 L28.8 9.5 Q29.6 10.3 28.8 11.1 L26.6 13.3 L18.7 5.4 L20.9 3.2 Q21.7 2.4 22.5 3.2 Z" fill="#515962"/>
    <path d="M17.3 6.8 L25.2 14.7 L11.4 28.5 L3.6 30.5 Q2.6 30.7 2.8 29.7 L4.6 21.5 Z" fill="#515962"/>
    <path d="M16.5 11.5 L7.2 20.8" stroke="#fff" stroke-width="1" fill="none"/>
    <path d="M5.4 25.6 Q8.2 24.8 8.5 28.2" stroke="#fff" stroke-width="1.2" fill="none"/>
  </svg>
  <div class="tablbl" style="left:42px">Content</div>

  <svg class="a" style="left:216px;top:103px" width="28" height="29" viewBox="0 0 28 29">
    <path fill="#0c0d0e" fill-rule="evenodd" d="M11.2 0.6 h5.6 l0.9 3.9 a10 10 0 0 1 2.6 1.5 l3.8 -1.2 l2.8 4.9 l-2.9 2.7 a10 10 0 0 1 0 3 l2.9 2.7 l-2.8 4.9 l-3.8 -1.2 a10 10 0 0 1 -2.6 1.5 l-0.9 3.9 h-5.6 l-0.9 -3.9 a10 10 0 0 1 -2.6 -1.5 l-3.8 1.2 l-2.8 -4.9 l2.9 -2.7 a10 10 0 0 1 0 -3 l-2.9 -2.7 l2.8 -4.9 l3.8 1.2 a10 10 0 0 1 2.6 -1.5 Z M14 9.9 a4.3 4.3 0 1 0 0.01 0 Z"/>
  </svg>
  <div class="tablbl" style="left:194px;color:#0c0d0e">Settings</div>

  <svg class="a" style="left:355px;top:102px" width="31" height="31" viewBox="0 0 31 31">
    <circle cx="15.5" cy="15.5" r="12.8" fill="none" stroke="#515962" stroke-width="4.4"/>
    <path d="M15.5 1.5 A14 14 0 0 0 15.5 29.5 Z" fill="#515962"/>
  </svg>
  <div class="tablbl" style="left:349px">Style</div>

  <svg class="a" style="left:505px;top:104px" width="28" height="29" viewBox="0 0 28 29">
    <path fill="#515962" fill-rule="evenodd" d="M11.2 0.6 h5.6 l0.9 3.9 a10 10 0 0 1 2.6 1.5 l3.8 -1.2 l2.8 4.9 l-2.9 2.7 a10 10 0 0 1 0 3 l2.9 2.7 l-2.8 4.9 l-3.8 -1.2 a10 10 0 0 1 -2.6 1.5 l-0.9 3.9 h-5.6 l-0.9 -3.9 a10 10 0 0 1 -2.6 -1.5 l-3.8 1.2 l-2.8 -4.9 l2.9 -2.7 a10 10 0 0 1 0 -3 l-2.9 -2.7 l2.8 -4.9 l3.8 1.2 a10 10 0 0 1 2.6 -1.5 Z M14 9.9 a4.3 4.3 0 1 0 0.01 0 Z"/>
  </svg>
  <div class="tablbl" style="left:475px">Advanced</div>

  <div class="a" style="left:0;top:192px;width:604px;height:2px;background:#e6e8ea"></div>
  <div class="a" style="left:152px;top:186px;width:156px;height:7px;background:#0c0d0e"></div>
  <!-- green settings highlight -->
  <div class="a" style="left:151px;top:77px;width:163px;height:117px;border:10px solid #a5c94a;border-radius:15px"></div>

  
  <!-- bottom bar -->
  <div class="a" style="left:0;top:1674px;width:394px;height:80px;background:#0c0d0e"></div>
  <svg class="a" style="left:0;top:1674px" width="394" height="80">
    <g fill="#a4afb7">
      <path fill-rule="evenodd" transform="translate(26,27)" d="M11.2 0.6 h5.6 l0.9 3.9 a10 10 0 0 1 2.6 1.5 l3.8 -1.2 l2.8 4.9 l-2.9 2.7 a10 10 0 0 1 0 3 l2.9 2.7 l-2.8 4.9 l-3.8 -1.2 a10 10 0 0 1 -2.6 1.5 l-0.9 3.9 h-5.6 l-0.9 -3.9 a10 10 0 0 1 -2.6 -1.5 l-3.8 1.2 l-2.8 -4.9 l2.9 -2.7 a10 10 0 0 1 0 -3 l-2.9 -2.7 l2.8 -4.9 l3.8 1.2 a10 10 0 0 1 2.6 -1.5 Z M14 9.9 a4.3 4.3 0 1 0 0.01 0 Z"/>
      <path d="M104 34 L118 26.5 L132 34 L118 41.5 Z"/>
      <path d="M104 40 L118 47.5 L132 40 L118 47.5 Z" stroke="#a4afb7" stroke-width="3"/>
    </g>
    <g fill="none" stroke="#a4afb7" stroke-width="3">
      <path d="M187 36 A11 11 0 1 1 190 44"/>
      <path d="M197 33 V40 L202 43"/>
      <rect x="271" y="31" width="15" height="18" rx="2"/>
      <path d="M268 38 V31 Q268 29.5 270 29.5 H283"/>
      <path d="M343 40 Q355 27 367 40 Q355 53 343 40 Z"/>
    </g>
    <path d="M184 33 L190 38 L193 30 Z" fill="#a4afb7"/>
    <circle cx="355" cy="40" r="4.5" fill="#a4afb7"/>
  </svg>
  <div class="a" style="left:394px;top:1674px;width:210px;height:80px;background:linear-gradient(#edb3f6,#dba8e4)"></div>
  <div class="a" style="left:394px;top:1676px;width:155px;height:3px;background:#dfa9e7"></div>
  <div class="a" style="left:549px;top:1674px;width:1px;height:80px;background:#e0aae8"></div>
  <div class="a" style="left:552px;top:1692px;width:49px;height:36px;background:#dfaae6;border-radius:3px"></div>
  <div class="a" style="left:436px;top:1700px;font-size:22px;color:#0c0d0e;line-height:26px;white-space:nowrap"><span class="sx" style="transform:scaleX(0.93)">Update</span></div>
  <svg class="a" style="left:566px;top:1705px" width="25" height="16"><path d="M2.5 13 L12.3 3.5 L22 13" fill="none" stroke="#0c0d0e" stroke-width="3.6" stroke-linecap="round" stroke-linejoin="round"/></svg>

  <!-- sections -->
  <svg class="a" style="left:46px;top:265px" width="9" height="14"><path d="M0 0 L8 6.7 L0 13.5 Z" fill="#0c0d0e"/></svg>
  <div class="sect" style="top:255px"><span class="sx" style="transform:scaleX(0.865)">Elements</span></div>
  <div class="sep" style="top:320px"></div>
  <svg class="a" style="left:46px;top:363px" width="9" height="14"><path d="M0 0 L8 6.7 L0 13.5 Z" fill="#0c0d0e"/></svg>
  <div class="sect" style="top:353px"><span class="sx" style="transform:scaleX(0.865)">Columns</span></div>
  <div class="sep" style="top:416px"></div>

  <svg class="a" style="left:42px;top:462px" width="16" height="10"><path d="M0 0 L15 0 L7.5 9 Z" fill="#0c0d0e"/></svg>
  <div class="sect" style="top:450px"><span class="sx" style="transform:scaleX(0.85)">Lightbox</span></div>
  <svg class="a" style="left:18px;top:434px" width="186" height="64"><ellipse cx="93" cy="32" rx="87" ry="26" fill="none" stroke="#a5c94a" stroke-width="6"/></svg>

  <!-- images links control -->
  <div class="a" style="left:40px;top:531px;font-size:23.5px;color:#515962;line-height:26px;white-space:nowrap"><span class="sx" style="transform:scaleX(0.99)">Images Links</span></div>
  <div class="a" style="left:40px;top:557px;width:524px;height:53px;border:2px solid #a4afb7;border-radius:6px"></div>
  <div class="a" style="left:52px;top:568px;font-size:24.5px;color:#515962;line-height:28px;white-space:nowrap"><span class="sx" style="transform:scaleX(0.935)">Open Page from "External URL" fields</span></div>
  <svg class="a" style="left:533px;top:576px" width="17" height="11"><path d="M0.5 0.5 L16 0.5 L8.25 10 Z" fill="#515962"/></svg>
  <div class="a" style="left:20px;top:512px;width:574px;height:121px;border:6px solid #a5c94a;border-radius:10px"></div>

  <!-- info box -->
  <div class="a" style="left:40px;top:640px;width:524px;height:168px;background:#f1fbf4;border-radius:0 8px 8px 0"></div>
  <div class="a" style="left:40px;top:640px;width:6px;height:168px;background:#0c875a"></div>
  <div class="a" style="left:77px;top:670px;font-size:24px;line-height:36px;color:#515962;font-style:italic;white-space:nowrap">
    <span class="sx" style="transform:scaleX(0.945)">Use "External URL" field on an image to</span><br>
    <span class="sx" style="transform:scaleX(0.945)">assign a page URL <b>in WordPress media</b></span><br>
    <span class="sx" style="transform:scaleX(0.945)"><b>library</b></span>
  </div>
  <div class="a" style="left:40px;top:836px;width:524px;height:2px;background:#e6e8ea"></div>

</div>


<!-- collapse tab -->
<div class="a" style="left:604px;top:826px;width:30px;height:100px;background:#fff;box-shadow:3px 0 6px rgba(0,0,0,0.08)"></div>
<svg class="a" style="left:611px;top:866px" width="16" height="22"><path d="M11.5 3.5 L4.5 11 L11.5 18.5" fill="none" stroke="#515962" stroke-width="2.8"/></svg>

<!-- tooltip -->
<div class="a" style="left:0;top:1713px;width:237px;height:41px;background:linear-gradient(#b2e4f2,#a6d4e0);border-radius:0 7px 0 7px"></div>
<div class="a" style="left:11px;top:1717px;font-size:25px;color:#1a1a1a;line-height:30px;white-space:nowrap;letter-spacing:0.55px">https://google.com</div>

<!-- green arrow -->
<svg class="a" style="left:0;top:0" width="2032" height="1756">
  <line x1="1407" y1="1538.5" x2="262" y2="1725" stroke="#a5c94a" stroke-width="8.5" stroke-linecap="round"/>
  <path d="M224 1731 L273.5 1695 L266.6 1720 L270 1728.7 L282 1749.5 Z" fill="#a5c94a"/>
</svg>

</body></html>
